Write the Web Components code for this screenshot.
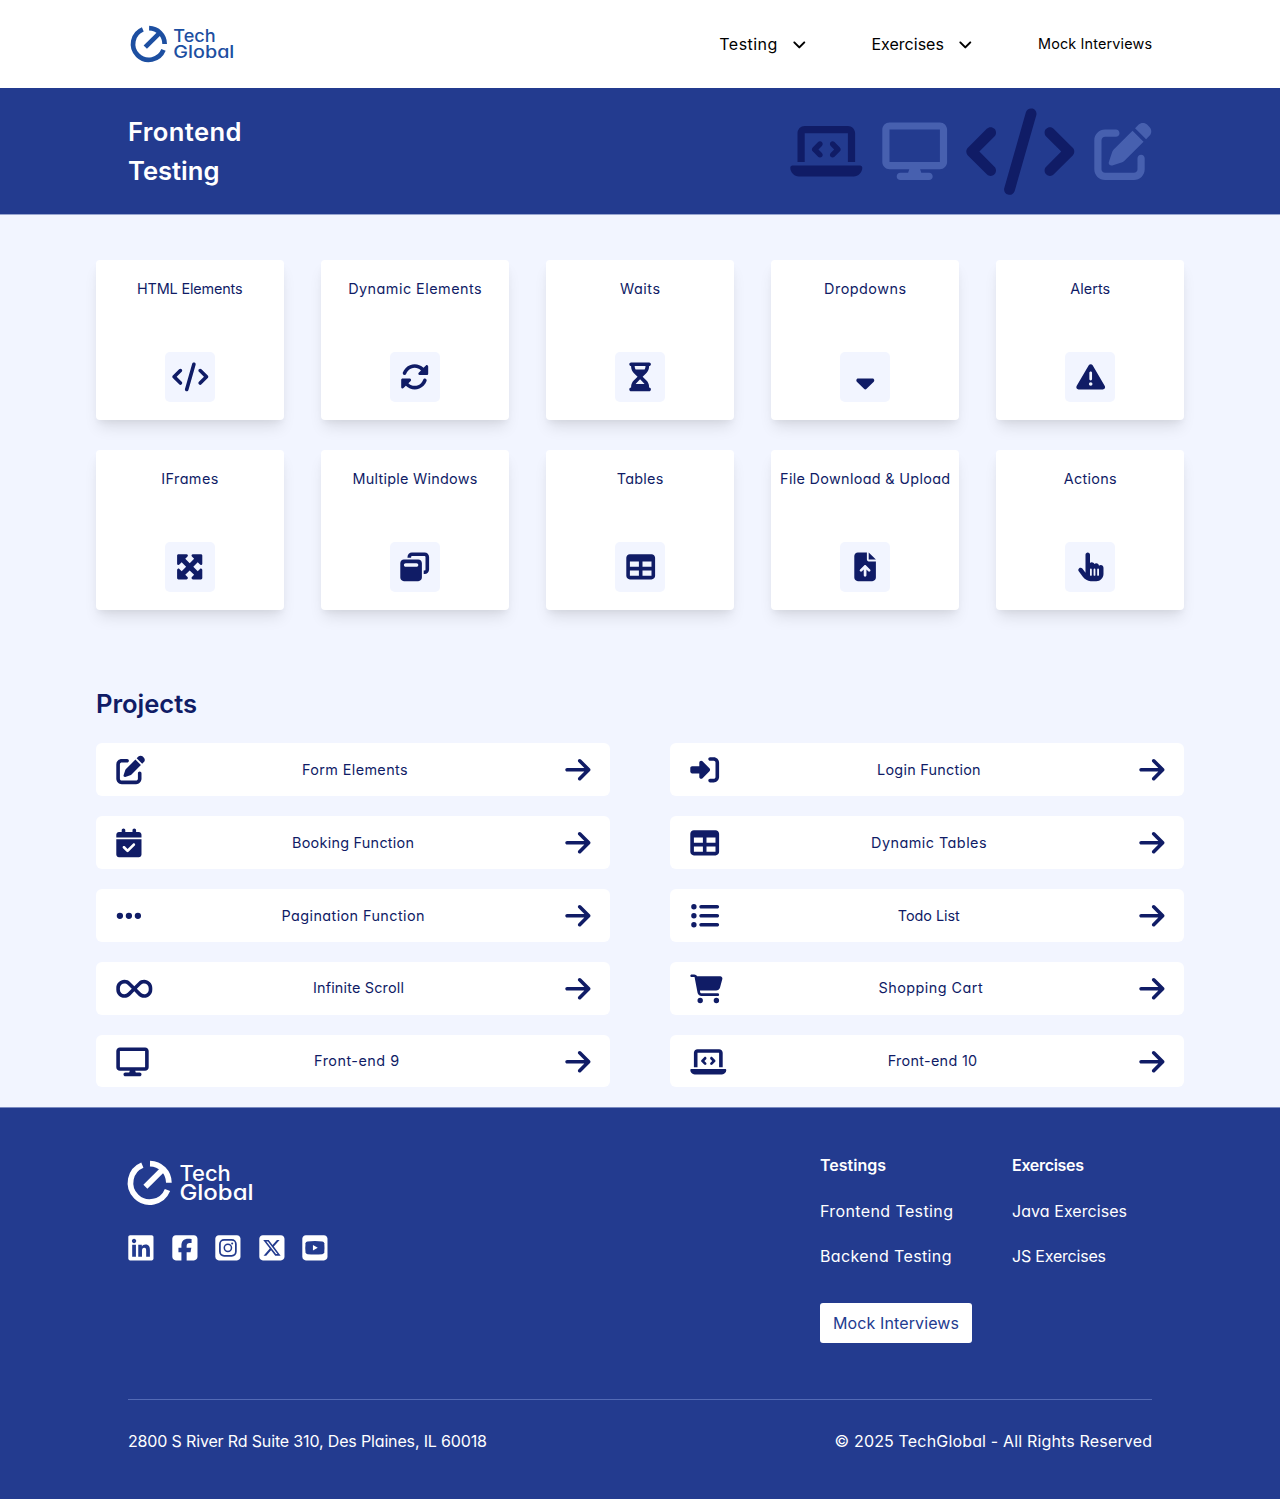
<!DOCTYPE html>
<html lang="en">
<head>
<meta charset="utf-8">
<title>TechGlobal - Frontend Testing</title>
<style>
  body{margin:0;background:#f2f5ff;color:#101c66;font-family:"Inter","Open Sans",sans-serif;font-feature-settings:"cv11";font-size:14.4px;line-height:1.5;--blue:#233b8f;--navy:#101c66;--pale:#f2f5ff}
</style>
</head>
<body>
<tg-app></tg-app>
<script>
const ICONS = {
  code:[640,'M392.8 1.2c-17-4.9-34.7 5-39.6 22l-128 448c-4.9 17 5 34.7 22 39.6s34.7-5 39.6-22l128-448c4.9-17-5-34.7-22-39.6zm80.6 120.1c-12.5 12.5-12.5 32.8 0 45.3L562.7 256l-89.4 89.4c-12.5 12.5-12.5 32.8 0 45.3s32.8 12.5 45.3 0l112-112c12.5-12.5 12.5-32.8 0-45.3l-112-112c-12.5-12.5-32.8-12.5-45.3 0zm-306.7 0c-12.5-12.5-32.8-12.5-45.3 0l-112 112c-12.5 12.5-12.5 32.8 0 45.3l112 112c12.5 12.5 32.8 12.5 45.3 0s12.5-32.8 0-45.3L77.3 256l89.4-89.4c12.5-12.5 12.5-32.8 0-45.3z'],
  laptop:[640,'M64 96c0-35.3 28.7-64 64-64H512c35.3 0 64 28.7 64 64V352H512V96H128V352H64V96zM0 403.2C0 392.6 8.6 384 19.2 384H620.8c10.6 0 19.2 8.6 19.2 19.2c0 42.4-34.4 76.8-76.8 76.8H76.8C34.4 480 0 445.6 0 403.2zM281 209l-31 31 31 31c9.4 9.4 9.4 24.6 0 33.9s-24.6 9.4-33.9 0l-48-48c-9.4-9.4-9.4-24.6 0-33.9l48-48c9.4-9.4 24.6-9.4 33.9 0s9.4 24.6 0 33.9zM393 175l48 48c9.4 9.4 9.4 24.6 0 33.9l-48 48c-9.4 9.4-24.6 9.4-33.9 0s-9.4-24.6 0-33.9l31-31-31-31c-9.4-9.4-9.4-24.6 0-33.9s24.6-9.4 33.9 0z'],
  display:[576,'M64 0C28.7 0 0 28.7 0 64V352c0 35.3 28.7 64 64 64H240l-10.7 32H160c-17.7 0-32 14.3-32 32s14.3 32 32 32H416c17.7 0 32-14.3 32-32s-14.3-32-32-32H346.7L336 416H512c35.3 0 64-28.7 64-64V64c0-35.3-28.7-64-64-64H64zM512 64V352H64V64H512z'],
  edit:[512,'M471.6 21.7c-21.9-21.9-57.3-21.9-79.2 0L362.3 51.7l97.9 97.9 30.1-30.1c21.9-21.9 21.9-57.3 0-79.2L471.6 21.7zm-299.2 220c-6.1 6.1-10.8 13.6-13.5 21.9l-29.6 88.8c-2.9 8.6-.6 18.1 5.8 24.6s15.9 8.7 24.6 5.8l88.8-29.6c8.2-2.7 15.7-7.4 21.9-13.5L437.7 172.3 339.7 74.3 172.4 241.7zM96 64C43 64 0 107 0 160V416c0 53 43 96 96 96H352c53 0 96-43 96-96V320c0-17.7-14.3-32-32-32s-32 14.3-32 32v96c0 17.7-14.3 32-32 32H96c-17.7 0-32-14.3-32-32V160c0-17.7 14.3-32 32-32h96c17.7 0 32-14.3 32-32s-14.3-32-32-32H96z'],
  rotate:[512,'M142.9 142.9c-17.5 17.5-30.1 38-37.8 59.8c-5.9 16.7-24.2 25.4-40.8 19.5s-25.4-24.2-19.5-40.8C55.6 150.7 73.2 122 97.6 97.6c87.2-87.2 228.3-87.5 315.8-1L455 55c6.9-6.9 17.2-8.9 26.2-5.2s14.8 12.5 14.8 22.2l0 128c0 13.3-10.7 24-24 24l-8.4 0L344 224c-9.7 0-18.5-5.8-22.2-14.8s-1.7-19.3 5.2-26.2l41.1-41.1c-62.6-61.5-163.1-61.2-225.3 1zM16 312c0-13.3 10.7-24 24-24l7.6 0 .7 0L168 288c9.7 0 18.5 5.8 22.2 14.8s1.7 19.3-5.2 26.2l-41.1 41.1c62.6 61.5 163.1 61.2 225.3-1c17.5-17.5 30.1-38 37.8-59.8c5.9-16.7 24.2-25.4 40.8-19.5s25.4 24.2 19.5 40.8c-10.8 30.6-28.4 59.3-52.9 83.8c-87.2 87.2-228.3 87.5-315.8 1L57 457c-6.9 6.9-17.2 8.9-26.2 5.2S16 449.7 16 440l0-119.6 0-.7 0-7.6z'],
  hourglass:[384,'M32 0C14.3 0 0 14.3 0 32S14.3 64 32 64V75c0 42.4 16.9 83.1 46.9 113.1L146.7 256 78.9 323.9C48.9 353.9 32 394.6 32 437v11c-17.7 0-32 14.3-32 32s14.3 32 32 32H64 320h32c17.7 0 32-14.3 32-32s-14.3-32-32-32V437c0-42.4-16.9-83.1-46.9-113.1L237.3 256l67.9-67.9c30-30 46.9-70.7 46.9-113.1V64c17.7 0 32-14.3 32-32s-14.3-32-32-32H320 64 32zM96 75V64H288V75c0 19-5.6 37.4-16 53H112c-10.3-15.6-16-34-16-53zm16 309c3.5-5.3 7.6-10.3 12.1-14.9L192 301.3l67.9 67.9c4.6 4.6 8.6 9.6 12.1 14.9H112z'],
  sort:[320,'M182.6 470.6c-12.5 12.5-32.8 12.5-45.3 0l-128-128c-9.2-9.2-11.9-22.9-6.9-34.9s16.6-19.8 29.6-19.8H288c12.9 0 24.6 7.8 29.6 19.8s2.2 25.7-6.9 34.9l-128 128z'],
  alert:[512,'M256 32c14.2 0 27.3 7.5 34.5 19.8l216 368c7.3 12.4 7.3 27.7 .2 40.1S486.3 480 472 480H40c-14.3 0-27.6-7.7-34.7-20.1s-7-27.8 .2-40.1l216-368C228.7 39.5 241.8 32 256 32zm0 128c-13.3 0-24 10.7-24 24V296c0 13.3 10.7 24 24 24s24-10.7 24-24V184c0-13.3-10.7-24-24-24zm32 224a32 32 0 1 0 -64 0 32 32 0 1 0 64 0z'],
  maximize:[512,'M200 32H56C42.7 32 32 42.7 32 56V200c0 9.7 5.8 18.5 14.8 22.2s19.3 1.7 26.2-5.2l40-40 79 79-79 79L73 295c-6.9-6.9-17.2-8.9-26.2-5.2S32 302.3 32 312V456c0 13.3 10.7 24 24 24H200c9.7 0 18.5-5.8 22.2-14.8s1.7-19.3-5.2-26.2l-40-40 79-79 79 79-40 40c-6.9 6.9-8.9 17.2-5.2 26.2s12.5 14.8 22.2 14.8H456c13.3 0 24-10.7 24-24V312c0-9.7-5.8-18.5-14.8-22.2s-19.3-1.7-26.2 5.2l-40 40-79-79 79-79 40 40c6.9 6.9 17.2 8.9 26.2 5.2s14.8-12.5 14.8-22.2V56c0-13.3-10.7-24-24-24H312c-9.7 0-18.5 5.8-22.2 14.8s-1.7 19.3 5.2 26.2l40 40-79 79-79-79 40-40c6.9-6.9 8.9-17.2 5.2-26.2S209.7 32 200 32z'],
  windows:[512,'M432 64H208c-8.8 0-16 7.2-16 16V96H128V80c0-44.2 35.8-80 80-80H432c44.2 0 80 35.8 80 80V304c0 44.2-35.8 80-80 80H416V320h16c8.8 0 16-7.2 16-16V80c0-8.8-7.2-16-16-16zM0 192c0-35.3 28.7-64 64-64H320c35.3 0 64 28.7 64 64V448c0 35.3-28.7 64-64 64H64c-35.3 0-64-28.7-64-64V192zm64 32c0 17.7 14.3 32 32 32H288c17.7 0 32-14.3 32-32s-14.3-32-32-32H96c-17.7 0-32 14.3-32 32z'],
  table:[512,'M64 256V160H224v96H64zm0 64H224v96H64V320zm224 96V320H448v96H288zM448 256H288V160H448v96zM64 32C28.7 32 0 60.7 0 96V416c0 35.3 28.7 64 64 64H448c35.3 0 64-28.7 64-64V96c0-35.3-28.7-64-64-64H64z'],
  file:[384,'M64 0C28.7 0 0 28.7 0 64V448c0 35.3 28.7 64 64 64H320c35.3 0 64-28.7 64-64V160H256c-17.7 0-32-14.3-32-32V0H64zM256 0V128H384L256 0zM216 408c0 13.3-10.7 24-24 24s-24-10.7-24-24V305.9l-31 31c-9.4 9.4-24.6 9.4-33.9 0s-9.4-24.6 0-33.9l72-72c9.4-9.4 24.6-9.4 33.9 0l72 72c9.4 9.4 9.4 24.6 0 33.9s-24.6 9.4-33.9 0l-31-31V408z'],
  hand:[448,'M128 40c0-22.1 17.9-40 40-40s40 17.9 40 40V188.2c8.5-7.6 19.7-12.2 32-12.2c20.6 0 38.2 13 45 31.2c8.8-9.3 21.2-15.2 35-15.2c25.3 0 46 19.5 47.9 44.3c8.5-7.7 19.8-12.3 32.1-12.3c26.5 0 48 21.5 48 48v48 16 48c0 70.7-57.3 128-128 128l-16 0H240l-.1 0h-5.2c-5 0-9.9-.3-14.7-1c-55.3-5.6-106.2-34-140-79L8 336c-13.3-17.7-9.7-42.7 8-56s42.7-9.7 56 8l56 74.7V40zM240 304c0-8.8-7.2-16-16-16s-16 7.2-16 16v96c0 8.8 7.2 16 16 16s16-7.2 16-16V304zm48-16c-8.8 0-16 7.2-16 16v96c0 8.8 7.2 16 16 16s16-7.2 16-16V304c0-8.8-7.2-16-16-16zm80 16c0-8.8-7.2-16-16-16s-16 7.2-16 16v96c0 8.8 7.2 16 16 16s16-7.2 16-16V304z'],
  login:[512,'M217.9 105.9L340.7 228.7c7.2 7.2 11.3 17.1 11.3 27.3s-4.1 20.1-11.3 27.3L217.9 406.1c-6.4 6.4-15 9.9-24 9.9c-18.7 0-33.9-15.2-33.9-33.9l0-62.1L32 320c-17.7 0-32-14.3-32-32l0-64c0-17.7 14.3-32 32-32l128 0 0-62.1c0-18.7 15.2-33.9 33.9-33.9c9 0 17.6 3.6 24 9.9zM352 416l64 0c17.7 0 32-14.3 32-32l0-256c0-17.7-14.3-32-32-32l-64 0c-17.7 0-32-14.3-32-32s14.3-32 32-32l64 0c53 0 96 43 96 96l0 256c0 53-43 96-96 96l-64 0c-17.7 0-32-14.3-32-32s14.3-32 32-32z'],
  calendar:[448,'M128 0c17.7 0 32 14.3 32 32V64H288V32c0-17.7 14.3-32 32-32s32 14.3 32 32V64h48c26.5 0 48 21.5 48 48v48H0V112C0 85.5 21.5 64 48 64H96V32c0-17.7 14.3-32 32-32zM0 192H448V464c0 26.5-21.5 48-48 48H48c-26.5 0-48-21.5-48-48V192zM329 305c9.4-9.4 9.4-24.6 0-33.9s-24.6-9.4-33.9 0l-95 95-47-47c-9.4-9.4-24.6-9.4-33.9 0s-9.4 24.6 0 33.9l64 64c9.4 9.4 24.6 9.4 33.9 0L329 305z'],
  dots:[448,'M8 256a56 56 0 1 1 112 0A56 56 0 1 1 8 256zm160 0a56 56 0 1 1 112 0 56 56 0 1 1 -112 0zm216-56a56 56 0 1 1 0 112 56 56 0 1 1 0-112z'],
  infinity:[640,'M0 241.1C0 161 65 96 145.1 96c38.5 0 75.4 15.3 102.6 42.5L320 210.7l72.2-72.2C419.5 111.3 456.4 96 494.9 96C575 96 640 161 640 241.1v29.7C640 351 575 416 494.9 416c-38.5 0-75.4-15.3-102.6-42.5L320 301.3l-72.2 72.2C220.5 400.7 183.6 416 145.1 416C65 416 0 351 0 270.9V241.1zM274.7 256l-72.2-72.2c-15.2-15.2-35.9-23.8-57.4-23.8C100.3 160 64 196.3 64 241.1v29.7c0 44.8 36.3 81.1 81.1 81.1c21.5 0 42.2-8.5 57.4-23.8L274.7 256zm90.5 0l72.2 72.2c15.2 15.2 35.9 23.8 57.4 23.8c44.8 0 81.1-36.3 81.1-81.1V241.1c0-44.8-36.3-81.1-81.1-81.1c-21.5 0-42.2 8.5-57.4 23.8L365.3 256z'],
  list:[512,'M64 144a48 48 0 1 0 0-96 48 48 0 1 0 0 96zM192 64c-17.7 0-32 14.3-32 32s14.3 32 32 32H480c17.7 0 32-14.3 32-32s-14.3-32-32-32H192zm0 160c-17.7 0-32 14.3-32 32s14.3 32 32 32H480c17.7 0 32-14.3 32-32s-14.3-32-32-32H192zm0 160c-17.7 0-32 14.3-32 32s14.3 32 32 32H480c17.7 0 32-14.3 32-32s-14.3-32-32-32H192zM64 464a48 48 0 1 0 0-96 48 48 0 1 0 0 96zm48-208a48 48 0 1 0 -96 0 48 48 0 1 0 96 0z'],
  cart:[576,'M0 24C0 10.7 10.7 0 24 0H69.5c22 0 41.5 12.8 50.6 32h411c26.3 0 45.5 25 38.6 50.4l-41 152.3c-8.5 31.4-37 53.3-69.5 53.3H170.7l5.4 28.5c2.2 11.3 12.1 19.5 23.6 19.5H488c13.3 0 24 10.7 24 24s-10.7 24-24 24H199.7c-34.6 0-64.3-24.6-70.7-58.5L77.4 54.5c-.7-3.8-4-6.5-7.9-6.5H24C10.7 48 0 37.3 0 24zM128 464a48 48 0 1 1 96 0 48 48 0 1 1 -96 0zm336-48a48 48 0 1 1 0 96 48 48 0 1 1 0-96z'],
  arrow:[448,'M438.6 278.6c12.5-12.5 12.5-32.8 0-45.3l-160-160c-12.5-12.5-32.8-12.5-45.3 0s-12.5 32.8 0 45.3L338.8 224 32 224c-17.7 0-32 14.3-32 32s14.3 32 32 32l306.7 0L233.4 393.4c-12.5 12.5-12.5 32.8 0 45.3s32.8 12.5 45.3 0l160-160z'],
  angle:[448,'M201.4 342.6c12.5 12.5 32.8 12.5 45.3 0l160-160c12.5-12.5 12.5-32.8 0-45.3s-32.8-12.5-45.3 0L224 274.7 86.6 137.4c-12.5-12.5-32.8-12.5-45.3 0s-12.5 32.8 0 45.3l160 160z'],
  linkedin:[448,'M416 32H31.9C14.3 32 0 46.5 0 64.3v383.4C0 465.5 14.3 480 31.9 480H416c17.6 0 32-14.5 32-32.3V64.3c0-17.8-14.4-32.3-32-32.3zM135.4 416H69V202.2h66.5V416zm-33.2-243c-21.3 0-38.5-17.3-38.5-38.5S80.9 96 102.2 96c21.2 0 38.5 17.3 38.5 38.5 0 21.3-17.2 38.5-38.5 38.5zm282.1 243h-66.4V312c0-24.8-.5-56.7-34.5-56.7-34.6 0-39.9 27-39.9 54.9V416h-66.4V202.2h63.7v29.2h.9c8.9-16.8 30.6-34.5 62.9-34.5 67.2 0 79.7 44.3 79.7 101.9V416z'],
  facebook:[448,'M64 32C28.7 32 0 60.7 0 96V416c0 35.3 28.7 64 64 64h98.2V334.2H109.4V256h52.8V222.3c0-87.1 39.4-127.5 125-127.5c16.2 0 44.2 3.2 55.7 6.4V172c-6-.6-16.5-1-29.6-1c-42 0-58.2 15.9-58.2 57.2V256h83.6l-14.4 78.2H255V480H384c35.3 0 64-28.7 64-64V96c0-35.3-28.7-64-64-64H64z'],
  instagram:[448,'M64 32C28.7 32 0 60.7 0 96V416c0 35.3 28.7 64 64 64H384c35.3 0 64-28.7 64-64V96c0-35.3-28.7-64-64-64H64z','<rect x="82" y="114" width="284" height="284" rx="74" fill="none" stroke="var(--blue)" stroke-width="31"/><circle cx="224" cy="256" r="64" fill="none" stroke="var(--blue)" stroke-width="27"/><circle cx="300" cy="180" r="18" fill="var(--blue)"/>'],
  x:[448,'M64 32C28.7 32 0 60.7 0 96V416c0 35.3 28.7 64 64 64H384c35.3 0 64-28.7 64-64V96c0-35.3-28.7-64-64-64H64zm297.1 84L257.3 234.6 379.4 396H283.8L209 298.1 123.3 396H75.8l111-126.9L69.7 116h98l67.7 89.5L313.6 116h47.5zM323.3 367.6L153.4 142.9H125.1L296.9 367.6h26.3z'],
  youtube:[448,'M64 32C28.7 32 0 60.7 0 96V416c0 35.3 28.7 64 64 64H384c35.3 0 64-28.7 64-64V96c0-35.3-28.7-64-64-64H64z','<path fill="var(--blue)" d="M93 142Q224 128 355 142Q386 146 391 176Q399 256 391 334Q386 364 355 369Q224 382 93 369Q62 364 57 334Q49 256 57 176Q62 146 93 142z"/><path d="M189.600 207.500v97.300l85.500-48.600z"/>']
};

const define = (name, render, ready) => customElements.define(name, class extends HTMLElement {
  connectedCallback() {
    if (this.shadowRoot) return;
    this.attachShadow({mode:'open'}).innerHTML = render(this);
    if (ready) ready(this);
  }
});

/* Icon of a given em size; its width follows the glyph's own box. */
define('tg-icon', el => {
  const [w, d, extra = ''] = ICONS[el.getAttribute('name')];
  const s = parseFloat(el.getAttribute('size') || 28.8);
  return `<style>:host{display:block;flex:none;width:${w*s/512}px;height:${s}px}svg{display:block;width:100%;height:100%;fill:currentColor;overflow:visible;transform:translate(.3px,.4px)}</style>
  <svg viewBox="0 0 ${w} 512" aria-hidden="true"><path d="${d}"/>${extra}</svg>`;
});

/* Label tracked to an exact measure. */
define('tg-label', el => `<style>:host{display:block;flex:none;width:${el.getAttribute('w')}px;white-space:nowrap}span{display:inline-block}</style><span>${el.textContent.replace('&','&amp;')}</span>`,
  el => {
    const span = el.shadowRoot.querySelector('span');
    const gap = parseFloat(el.getAttribute('w')) - span.getBoundingClientRect().width;
    span.style.letterSpacing = gap / (span.textContent.length - 1) + 'px';
  });

define('tg-logo', el => {
  const s = parseFloat(el.getAttribute('scale') || 1);
  return `<style>:host{display:block;width:${104*s}px;height:${36*s}px}svg{display:block;overflow:visible}text{font-size:17.2px;font-weight:500;fill:currentColor}</style>
  <svg width="${104*s}" height="${36*s}" viewBox="0 0 104 36">
    <g fill="none" stroke="currentColor" stroke-width="4.7">
      <path d="M18.100 2.150A15.800 15.800 0 0 1 33.650 17.900"/>
      <path d="M32.500 23.900A15.800 15.800 0 1 1 11.800 3.400"/>
      <path d="M14.300 21.200L29.200 6.300"/>
    </g>
    <text><tspan x="42.300" y="16.300" textLength="42.300" lengthAdjust="spacingAndGlyphs">Tech</tspan><tspan x="42.300" y="31.700" textLength="61" lengthAdjust="spacingAndGlyphs">Global</tspan></text>
  </svg>`;
});

define('tg-header', () => `<style>
  :host{display:flex;box-sizing:border-box;height:88px;padding:0 128px 0 130.700px;background:#fff;color:#000;align-items:center;justify-content:space-between}
  tg-logo{color:#1d4fa1}
  nav{display:flex;align-items:center;gap:65.600px}
  div{display:flex;align-items:center;gap:14.500px;font-size:16px}
  tg-icon{padding-top:1px}
</style><tg-logo></tg-logo><nav>
  <div><tg-label w="58">Testing</tg-label><tg-icon name="angle" size="16"></tg-icon></div>
  <div><tg-label w="72.500">Exercises</tg-label><tg-icon name="angle" size="16"></tg-icon></div>
  <tg-label w="114">Mock Interviews</tg-label></nav>`);

define('tg-hero', () => `<style>
  :host{display:flex;box-sizing:border-box;height:126.400px;padding:0 128px;background:var(--blue);color:#fff;align-items:center;justify-content:space-between}
  h1{margin:0;padding-top:2px;font-size:25.600px;line-height:38.800px;font-weight:600}
  div{display:flex;align-items:center;gap:20px;color:var(--navy)}
  .soft{color:#4760af}
</style><h1><tg-label w="113.500">Frontend</tg-label><tg-label w="91.500">Testing</tg-label></h1>
<div><tg-icon name="laptop" size="57.600"></tg-icon><tg-icon class="soft" name="display" size="57.600"></tg-icon><tg-icon name="code" size="86.400"></tg-icon><tg-icon class="soft" name="edit" size="57.600"></tg-icon></div>`);

define('tg-card', el => `<style>
  :host{display:flex;flex-direction:column;box-sizing:border-box;height:160px;padding:17.400px 0 18.800px;background:#fff;border-radius:4px;align-items:center;justify-content:space-between;box-shadow:0 10px 15px -3px rgba(0,0,0,.1),0 4px 6px -2px rgba(0,0,0,.05)}
  .tile{display:flex;width:50px;height:50px;border-radius:5px;background:var(--pale);align-items:center;justify-content:center}
</style><slot></slot><div class="tile"><tg-icon name="${el.getAttribute('icon')}"></tg-icon></div>`);

define('tg-project', el => `<style>
  :host{display:flex;box-sizing:border-box;height:52.800px;padding:0 20px;background:#fff;border-radius:6px;align-items:center;justify-content:space-between}
</style><tg-icon name="${el.getAttribute('icon')}"></tg-icon><slot></slot><tg-icon name="arrow"></tg-icon>`);

define('tg-main', () => {
  const cards = [['HTML Elements',105.5,'code'],['Dynamic Elements',133.5,'rotate'],['Waits',40,'hourglass'],['Dropdowns',82,'sort'],['Alerts',40,'alert'],['IFrames',57,'maximize'],['Multiple Windows',125,'windows'],['Tables',46.5,'table'],['File Download & Upload',170,'file'],['Actions',53,'hand']];
  const projects = [['Form Elements',105.5,'edit'],['Login Function',103.5,'login'],['Booking Function',122,'calendar'],['Dynamic Tables',115.5,'table'],['Pagination Function',143,'dots'],['Todo List',62,'list'],['Infinite Scroll',91,'infinity'],['Shopping Cart',104,'cart'],['Front-end 9',85,'display'],['Front-end 10',89.500,'laptop']];
  const make = (tag, rows) => rows.map(([t, w, i]) => `<${tag} icon="${i}"><tg-label w="${w}">${t.replace('&','&amp;')}</tg-label></${tag}>`).join('');
  return `<style>
  :host{display:block;padding:45px 96px 20px;border-top:1px solid #98a5d0}
  .cards{display:grid;grid-template-columns:repeat(5,1fr);gap:30px 37.500px}
  h2{margin:74px 0 19.600px;font-size:25.600px;line-height:39.400px;font-weight:600}
  .projects{display:grid;grid-template-columns:1fr 1fr;gap:20px 60px}
  </style><section class="cards">${make('tg-card', cards)}</section>
  <h2><tg-label w="101">Projects</tg-label></h2>
  <section class="projects">${make('tg-project', projects)}</section>`;
});

define('tg-footer', () => `<style>
  :host{display:block;box-sizing:border-box;height:391.800px;padding:0 128px;background:var(--blue);border-top:1px solid #7b8bc1;color:#fff;font-size:16px}
  .top{display:flex;box-sizing:border-box;height:290.300px;padding-top:45px;justify-content:space-between}
  .brand{display:flex;flex-direction:column;padding-top:7.300px;gap:29px}
  .social{display:flex;gap:18.400px}
  .links{display:flex}
  .col{display:flex;flex-direction:column;gap:21.500px;align-items:flex-start}
  .first{width:192px}.last{width:140px}
  b{font-weight:600}
  .btn{display:flex;box-sizing:border-box;width:152px;height:39.600px;margin-top:13.500px;border-radius:3px;background:#fff;color:var(--blue);align-items:center;justify-content:center}
  .bottom{display:flex;border-top:1px solid #536ab5;padding-top:29px;justify-content:space-between}
</style>
<div class="top"><div class="brand"><tg-logo scale="1.215"></tg-logo>
  <div class="social"><tg-icon name="linkedin"></tg-icon><tg-icon name="facebook"></tg-icon><tg-icon name="instagram"></tg-icon><tg-icon name="x"></tg-icon><tg-icon name="youtube"></tg-icon></div></div>
  <div class="links"><div class="col first"><b><tg-label w="66">Testings</tg-label></b><tg-label w="133">Frontend Testing</tg-label><tg-label w="131.500">Backend Testing</tg-label><div class="btn"><tg-label w="126">Mock Interviews</tg-label></div></div>
  <div class="col last"><b><tg-label w="72">Exercises</tg-label></b><tg-label w="115">Java Exercises</tg-label><tg-label w="94">JS Exercises</tg-label></div></div></div>
<div class="bottom"><tg-label w="359">2800 S River Rd Suite 310, Des Plaines, IL 60018</tg-label><tg-label w="317.500">© 2025 TechGlobal - All Rights Reserved</tg-label></div>`);

define('tg-app', () => `<style>:host{display:block}</style><tg-header></tg-header><tg-hero></tg-hero><tg-main></tg-main><tg-footer></tg-footer>`);
</script>
</body>
</html>
